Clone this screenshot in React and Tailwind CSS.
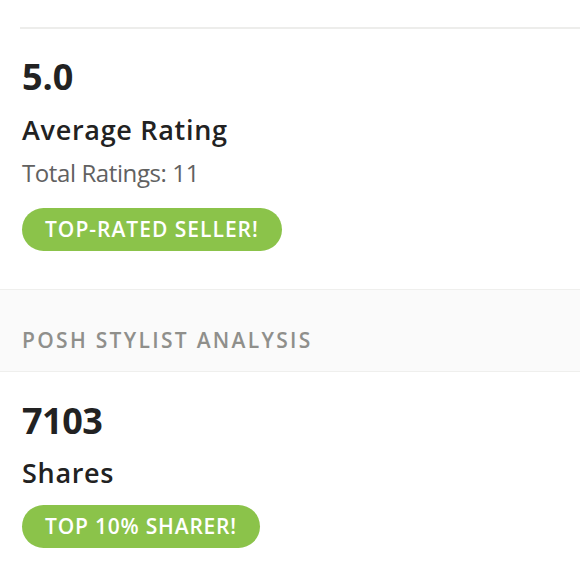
export default function App() {
  return (
    <div className="w-[580px] h-[580px] overflow-hidden bg-white font-['Open_Sans',sans-serif] text-[#222]">
      <div className="h-[27px]" />
      <div className="ml-5 border-t-2 border-[#ededeb]" />

      {/* Rating block */}
      <section className="px-[22px] pt-[28px] pb-[38px]">
        <div className="text-[36px] leading-[40px] font-bold">5.0</div>
        <div className="mt-[18px] text-[27px] leading-[30px] font-semibold tracking-[0.7px]">Average Rating</div>
        <div className="mt-[14px] text-[24px] leading-[28px] tracking-[-0.4px] text-[#616161]">Total Ratings: 11</div>
        <div className="mt-[21px] inline-flex h-[43px] items-center rounded-full bg-[#8bc34a] px-[23px] text-[21px] font-semibold tracking-[1px] text-white">
          TOP-RATED SELLER!
        </div>
      </section>

      {/* Section header */}
      <div className="h-[83px] border-y border-[#efefed] bg-[#fafafa] px-[22px] pt-[36px]">
        <div className="text-[21px] leading-[28px] font-semibold tracking-[2.3px] text-[#8f8f8b]">
          POSH STYLIST ANALYSIS
        </div>
      </div>

      {/* Shares block */}
      <section className="px-[22px] pt-[29px]">
        <div className="text-[36px] leading-[40px] font-bold tracking-[-0.5px]">7103</div>
        <div className="mt-[17px] text-[27px] leading-[30px] font-semibold tracking-[0.7px]">Shares</div>
        <div className="mt-[17px] inline-flex h-[43px] items-center rounded-full bg-[#8bc34a] px-[23px] text-[21px] font-semibold tracking-[0.8px] text-white">
          TOP 10% SHARER!
        </div>
      </section>
    </div>
  );
}
